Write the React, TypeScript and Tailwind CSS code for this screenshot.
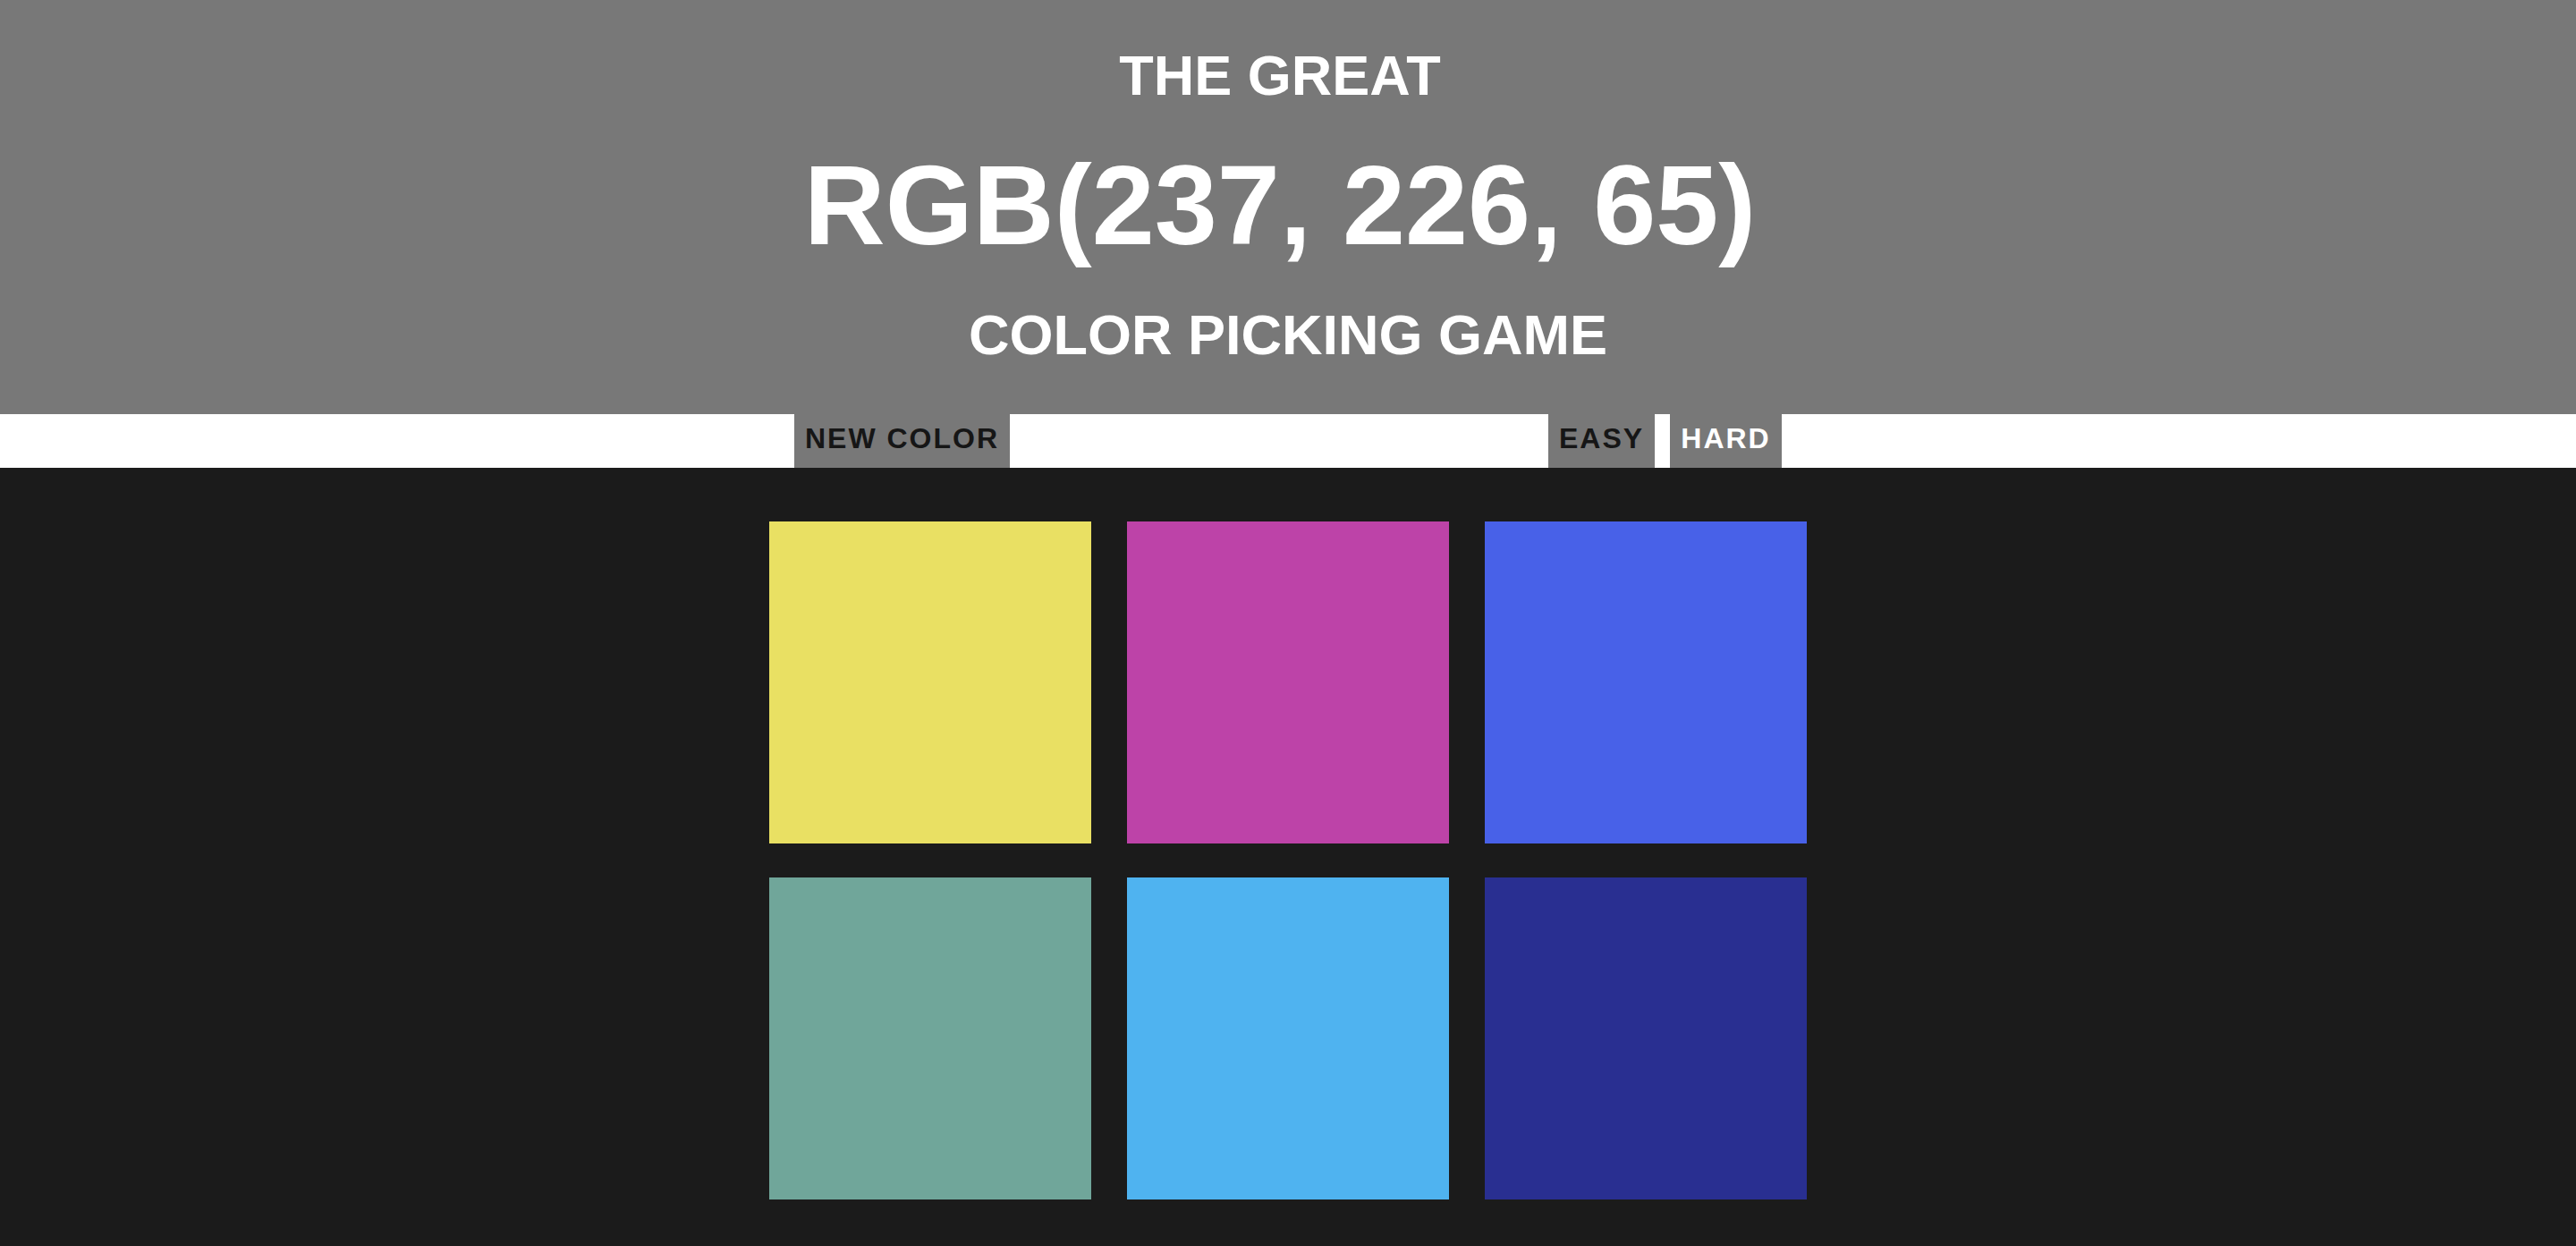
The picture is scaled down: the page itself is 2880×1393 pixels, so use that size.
import React from "react";

const squares = [
  "#E9E063",
  "#BD43A8",
  "#4861E8",
  "#70A69A",
  "#4FB3F0",
  "#292F91",
];

export default function App() {
  return (
    <div
      className="min-h-screen w-full flex flex-col bg-[#1b1b1b]"
      style={{ fontFamily: '"Liberation Sans", Arial, Helvetica, sans-serif' }}
    >
      <header className="bg-[#787878] text-white font-bold uppercase flex flex-col items-center pt-[44px] pb-[49px]">
        <div className="h-[80px] leading-[80px] text-[63px] pr-[18px]">The Great</div>
        <div className="mt-[31px] h-[150px] leading-[150px] text-[126px] pr-[18px]">RGB(237, 226, 65)</div>
        <div className="mt-[29px] h-[80px] leading-[80px] text-[63px]">Color Picking Game</div>
      </header>

      <nav className="bg-white h-[60px] flex justify-center">
        <button className="w-[241px] h-[60px] bg-[#787878] text-[#161616] font-bold uppercase text-[32px] tracking-[2px] flex items-center justify-center pb-[6px]">
          New Color
        </button>
        <div className="w-[602px]" />
        <div className="flex gap-[17px]">
          <button className="w-[119px] h-[60px] bg-[#787878] text-[#161616] font-bold uppercase text-[32px] tracking-[2px] flex items-center justify-center pb-[6px]">
            Easy
          </button>
          <button className="w-[125px] h-[60px] bg-[#787878] text-white font-bold uppercase text-[32px] tracking-[2px] flex items-center justify-center pb-[6px]">
            Hard
          </button>
        </div>
      </nav>

      <main className="flex-1 bg-[#1b1b1b] flex justify-center pt-[60px]">
        <div className="grid grid-cols-[360px_360px_360px] gap-x-[40px] gap-y-[38px] h-fit">
          {squares.map((c) => (
            <div key={c} className="w-[360px] h-[360px]" style={{ backgroundColor: c }} />
          ))}
        </div>
      </main>
    </div>
  );
}
